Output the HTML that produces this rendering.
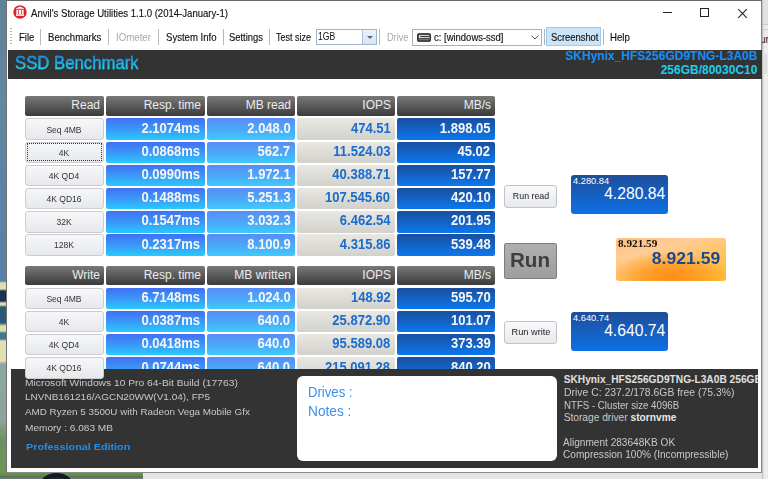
<!DOCTYPE html>
<html><head><meta charset="utf-8"><style>
*{box-sizing:border-box}
html,body{margin:0;padding:0}
body{width:768px;height:479px;overflow:hidden;position:relative;background:#e6e6e6;font-family:"Liberation Sans",sans-serif}
.a{position:absolute}
.t{position:absolute;white-space:pre;line-height:1}
.hd{position:absolute;border-radius:2px;background:linear-gradient(#767676,#5a5a5a 50%,#3c3c3c)}
.bt{position:absolute;border-radius:3px;border:1px solid #cdcdcd;background:linear-gradient(#f6f7f9,#e6e8eb)}
.c1{position:absolute;border-radius:2px;background:linear-gradient(#416ff4,#3a9bf8 55%,#27cbfe)}
.c2{position:absolute;border-radius:2px;background:linear-gradient(#5a8cf6,#4aaaf8 55%,#3ecbfd)}
.c3{position:absolute;border-radius:2px;background:linear-gradient(#e9e7e1,#d2d1cc)}
.c5{position:absolute;border-radius:2px;background:linear-gradient(#1b4e9e,#0b78ee)}
</style></head><body>
<div class="a" style="left:0px;top:0px;width:6px;height:479px;background:linear-gradient(#5e8296 0,#6088a2 100px,#5a80a8 250px,#5a80a8 281px,#dcdcb0 283px,#e0e0b0 289px,#1c3050 291px,#1c3050 301px,#d8dcb0 303px,#d8dcb0 305px,#2a5a78 307px,#2a5a78 323px,#dcdcae 326px,#dcdcae 331px,#3a7a90 333px,#3a7a90 339px,#e0e0b0 341px,#e0e0b0 361px,#8aa8a0 364px,#8ea49a 420px,#6e9060 440px,#6a9a50 479px)"></div>
<div class="a" style="left:762px;top:0px;width:6px;height:479px;background:linear-gradient(90deg,#a8a8a8 0,#d4d4d4 1px,#ececec 2px,#ebebeb 6px)"></div>
<div class="a" style="left:763px;top:0px;width:5px;height:24px;background:#e2e2e2"></div>
<div class="a" style="left:763px;top:24px;width:5px;height:1px;background:#c8c8c8"></div>
<div class="a" style="left:763px;top:29px;width:5px;height:1px;background:#d0d0d0"></div>
<div class="a" style="left:764px;top:54px;width:3px;height:20px;background:#dedede"></div>
<div class="a" style="left:762px;top:30px;width:6px;height:18px;overflow:hidden"><div class="t" style="left:-2px;top:4.5px;font-size:10px;color:#222">ur</div></div>
<div class="a" style="left:0px;top:472px;width:143px;height:7px;background:linear-gradient(#6a9650 0,#5e8a48 4px,#4a6a40 5px,#7a8088 6px,#6e7680 7px)"></div>
<div class="a" style="left:41px;top:473px;width:31px;height:20px;border-radius:50%;background:#1e2a2e;border:4px solid #111a1c"></div>
<div class="a" style="left:143px;top:473px;width:619px;height:6px;background:#e4e4e4"></div>
<div class="a" style="left:6px;top:0px;width:756px;height:473px;background:#fff;border:1px solid #8a8a8a;border-top-color:#6a6a6a;border-left-color:#727272"></div>
<svg class="a" style="left:12.8px;top:5.2px" width="14" height="14" viewBox="0 0 14 14"><circle cx="7" cy="6.95" r="6.7" fill="#e3202a"/><path d="M3.4 3.3 L7 1.5 L10.6 3.3 Z" fill="#fff"/><rect x="3" y="3.3" width="8" height="0.9" fill="#fff"/><rect x="3.4" y="5" width="7.2" height="4.2" fill="#fff"/><rect x="5.05" y="5.4" width="0.85" height="3.6" fill="#e3202a"/><rect x="8.05" y="5.4" width="0.85" height="3.6" fill="#e3202a"/><rect x="3" y="9.2" width="8" height="1.8" fill="#ffd8d0"/></svg>
<div class="t" style="top:7.99px;font-size:11px;color:#111;left:30.50px;transform:scaleX(0.87);transform-origin:0 0;-webkit-text-stroke:0.15px #111;">Anvil's Storage Utilities 1.1.0 (2014-January-1)</div>
<div class="a" style="left:663px;top:12px;width:9px;height:1px;background:#222"></div>
<div class="a" style="left:700px;top:8px;width:9px;height:9px;border:1px solid #222"></div>
<svg class="a" style="left:737px;top:7.5px" width="11" height="11" viewBox="0 0 11 11"><path d="M1.2 1.2 L9.8 9.8 M9.8 1.2 L1.2 9.8" stroke="#222" stroke-width="1.05"/></svg>
<div class="a" style="left:10px;top:28px;width:2px;height:1px;background:#b4b4b4"></div>
<div class="a" style="left:10px;top:31px;width:2px;height:1px;background:#b4b4b4"></div>
<div class="a" style="left:10px;top:34px;width:2px;height:1px;background:#b4b4b4"></div>
<div class="a" style="left:10px;top:37px;width:2px;height:1px;background:#b4b4b4"></div>
<div class="a" style="left:10px;top:40px;width:2px;height:1px;background:#b4b4b4"></div>
<div class="a" style="left:10px;top:43px;width:2px;height:1px;background:#b4b4b4"></div>
<div class="a" style="left:40px;top:29px;width:1px;height:16px;background:#b8b8b8"></div>
<div class="a" style="left:108px;top:29px;width:1px;height:16px;background:#b8b8b8"></div>
<div class="a" style="left:158px;top:29px;width:1px;height:16px;background:#b8b8b8"></div>
<div class="a" style="left:223px;top:29px;width:1px;height:16px;background:#b8b8b8"></div>
<div class="a" style="left:269px;top:29px;width:1px;height:16px;background:#b8b8b8"></div>
<div class="a" style="left:379px;top:29px;width:1px;height:16px;background:#b8b8b8"></div>
<div class="a" style="left:544px;top:29px;width:1px;height:16px;background:#b8b8b8"></div>
<div class="a" style="left:603px;top:29px;width:1px;height:16px;background:#b8b8b8"></div>
<div class="t" style="top:32.67px;font-size:10.2px;color:#111;left:19.20px;transform:scaleX(0.93);transform-origin:0 0;-webkit-text-stroke:0.15px #111;">File</div>
<div class="t" style="top:32.67px;font-size:10.2px;color:#111;left:48.30px;transform:scaleX(0.94);transform-origin:0 0;-webkit-text-stroke:0.15px #111;">Benchmarks</div>
<div class="t" style="top:32.67px;font-size:10.2px;color:#a8a8a8;left:115.80px;transform:scaleX(0.95);transform-origin:0 0;">IOmeter</div>
<div class="t" style="top:32.67px;font-size:10.2px;color:#111;left:165.50px;transform:scaleX(0.94);transform-origin:0 0;-webkit-text-stroke:0.15px #111;">System Info</div>
<div class="t" style="top:32.67px;font-size:10.2px;color:#111;left:229.40px;transform:scaleX(0.92);transform-origin:0 0;-webkit-text-stroke:0.15px #111;">Settings</div>
<div class="t" style="top:32.67px;font-size:10.2px;color:#111;left:275.80px;transform:scaleX(0.88);transform-origin:0 0;-webkit-text-stroke:0.15px #111;">Test size</div>
<div class="a" style="left:316px;top:29px;width:61px;height:16px;border:1px solid #9fb4d2;background:#fff"></div>
<div class="a" style="left:362px;top:30px;width:14px;height:14px;background:linear-gradient(#eaf2fb,#d6e5f5);border-left:1px solid #a8c2e0"></div>
<svg class="a" style="left:367px;top:36px" width="6" height="3"><path d="M0 0 L6 0 L3 3 Z" fill="#5a6878"/></svg>
<div class="t" style="top:31.87px;font-size:10.2px;color:#111;left:317.60px;transform:scaleX(0.85);transform-origin:0 0;">1GB</div>
<div class="t" style="top:32.67px;font-size:10.2px;color:#a8a8a8;left:386.70px;transform:scaleX(0.9);transform-origin:0 0;">Drive</div>
<div class="a" style="left:412px;top:29px;width:130px;height:17px;border:1px solid #b0b0b0;background:#fff"></div>
<svg class="a" style="left:416.8px;top:32.8px" width="14" height="9" viewBox="0 0 14 9"><rect x="0.8" y="0.8" width="12.4" height="7.4" rx="1" fill="#7a7a7a" stroke="#1a1a1a" stroke-width="1.3"/><rect x="2" y="2.3" width="10.2" height="3.6" fill="#f4f4f4"/><rect x="3.2" y="3.1" width="8.8" height="1.1" fill="#2a2a2a"/><rect x="2" y="5.2" width="10.2" height="0.9" fill="#2a2a2a"/></svg>
<div class="t" style="top:32.67px;font-size:10.2px;color:#111;left:433.50px;transform:scaleX(0.93);transform-origin:0 0;-webkit-text-stroke:0.15px #111;">c: [windows-ssd]</div>
<svg class="a" style="left:531px;top:35px" width="8" height="5" viewBox="0 0 8 5"><path d="M0.5 0.5 L4 4 L7.5 0.5" fill="none" stroke="#555" stroke-width="1"/></svg>
<div class="a" style="left:546px;top:27px;width:55px;height:19px;background:#cce4f7;border:1px solid #99ccf3"></div>
<div class="t" style="top:32.67px;font-size:10.2px;color:#111;left:550.60px;transform:scaleX(0.92);transform-origin:0 0;-webkit-text-stroke:0.15px #111;">Screenshot</div>
<div class="t" style="top:32.67px;font-size:10.2px;color:#111;left:610.40px;transform:scaleX(0.95);transform-origin:0 0;-webkit-text-stroke:0.15px #111;">Help</div>
<div class="a" style="left:8px;top:50px;width:754px;height:29px;background:#333"></div>
<div class="t" style="top:53.79px;font-size:18.2px;color:#18a6ee;left:15.00px;transform:scaleX(0.92);transform-origin:0 0;background:linear-gradient(#1a8ae6 20%,#20dcf4 85%);-webkit-background-clip:text;color:transparent;-webkit-text-stroke:0.35px rgba(30,180,240,0.6);">SSD Benchmark</div>
<div class="t" style="top:50.04px;font-size:12px;color:#1590f5;font-weight:700;right:10.60px;">SKHynix_HFS256GD9TNG-L3A0B</div>
<div class="t" style="top:64.24px;font-size:12px;color:#1ecdee;font-weight:700;right:10.60px;">256GB/80030C10</div>
<div class="a" style="left:25px;top:96px;width:79px;height:20px;border-radius:2px;background:linear-gradient(#787878,#5a5a5a 50%,#3b3b3b)"></div>
<div class="t" style="top:99.24px;font-size:12px;color:#ececec;right:668.00px;">Read</div>
<div class="a" style="left:106px;top:96px;width:99px;height:20px;border-radius:2px;background:linear-gradient(#787878,#5a5a5a 50%,#3b3b3b)"></div>
<div class="t" style="top:99.24px;font-size:12px;color:#ececec;right:567.00px;">Resp. time</div>
<div class="a" style="left:207px;top:96px;width:88px;height:20px;border-radius:2px;background:linear-gradient(#787878,#5a5a5a 50%,#3b3b3b)"></div>
<div class="t" style="top:99.24px;font-size:12px;color:#ececec;right:477.00px;">MB read</div>
<div class="a" style="left:297px;top:96px;width:98px;height:20px;border-radius:2px;background:linear-gradient(#787878,#5a5a5a 50%,#3b3b3b)"></div>
<div class="t" style="top:99.24px;font-size:12px;color:#ececec;right:377.00px;">IOPS</div>
<div class="a" style="left:397px;top:96px;width:98px;height:20px;border-radius:2px;background:linear-gradient(#787878,#5a5a5a 50%,#3b3b3b)"></div>
<div class="t" style="top:99.24px;font-size:12px;color:#ececec;right:277.00px;">MB/s</div>
<div class="bt" style="left:25px;top:118.40px;width:79px;height:21.6px"></div>
<div class="t" style="top:124.56px;font-size:9.5px;color:#333;left:-136.20px;width:400px;text-align:center;transform:scaleX(0.9);transform-origin:50% 0;">Seq 4MB</div>
<div class="c1" style="left:106px;top:118.40px;width:99px;height:21.6px"></div>
<div class="t" style="top:120.85px;font-size:14px;color:#f6f6f6;font-weight:700;right:567.60px;transform:scaleX(0.93);transform-origin:100% 0;">2.1074ms</div>
<div class="c2" style="left:207px;top:118.40px;width:88px;height:21.6px"></div>
<div class="t" style="top:120.85px;font-size:14px;color:#f6f6f6;font-weight:700;right:477.60px;transform:scaleX(0.93);transform-origin:100% 0;">2.048.0</div>
<div class="c3" style="left:297px;top:118.40px;width:98px;height:21.6px"></div>
<div class="t" style="top:120.85px;font-size:14px;color:#1a6ccc;font-weight:700;right:377.60px;transform:scaleX(0.93);transform-origin:100% 0;">474.51</div>
<div class="c5" style="left:397px;top:118.40px;width:98px;height:21.6px"></div>
<div class="t" style="top:120.85px;font-size:14px;color:#f6f6f6;font-weight:700;right:277.60px;transform:scaleX(0.93);transform-origin:100% 0;">1.898.05</div>
<div class="bt" style="left:25px;top:141.55px;width:79px;height:21.6px"></div>
<div class="a" style="left:27px;top:143.35px;width:75px;height:17.6px;border:1px dotted #333"></div>
<div class="t" style="top:147.71px;font-size:9.5px;color:#333;left:-136.20px;width:400px;text-align:center;transform:scaleX(0.9);transform-origin:50% 0;">4K</div>
<div class="c1" style="left:106px;top:141.55px;width:99px;height:21.6px"></div>
<div class="t" style="top:144.00px;font-size:14px;color:#f6f6f6;font-weight:700;right:567.60px;transform:scaleX(0.93);transform-origin:100% 0;">0.0868ms</div>
<div class="c2" style="left:207px;top:141.55px;width:88px;height:21.6px"></div>
<div class="t" style="top:144.00px;font-size:14px;color:#f6f6f6;font-weight:700;right:477.60px;transform:scaleX(0.93);transform-origin:100% 0;">562.7</div>
<div class="c3" style="left:297px;top:141.55px;width:98px;height:21.6px"></div>
<div class="t" style="top:144.00px;font-size:14px;color:#1a6ccc;font-weight:700;right:377.60px;transform:scaleX(0.93);transform-origin:100% 0;">11.524.03</div>
<div class="c5" style="left:397px;top:141.55px;width:98px;height:21.6px"></div>
<div class="t" style="top:144.00px;font-size:14px;color:#f6f6f6;font-weight:700;right:277.60px;transform:scaleX(0.93);transform-origin:100% 0;">45.02</div>
<div class="bt" style="left:25px;top:164.70px;width:79px;height:21.6px"></div>
<div class="t" style="top:170.86px;font-size:9.5px;color:#333;left:-136.20px;width:400px;text-align:center;transform:scaleX(0.9);transform-origin:50% 0;">4K QD4</div>
<div class="c1" style="left:106px;top:164.70px;width:99px;height:21.6px"></div>
<div class="t" style="top:167.15px;font-size:14px;color:#f6f6f6;font-weight:700;right:567.60px;transform:scaleX(0.93);transform-origin:100% 0;">0.0990ms</div>
<div class="c2" style="left:207px;top:164.70px;width:88px;height:21.6px"></div>
<div class="t" style="top:167.15px;font-size:14px;color:#f6f6f6;font-weight:700;right:477.60px;transform:scaleX(0.93);transform-origin:100% 0;">1.972.1</div>
<div class="c3" style="left:297px;top:164.70px;width:98px;height:21.6px"></div>
<div class="t" style="top:167.15px;font-size:14px;color:#1a6ccc;font-weight:700;right:377.60px;transform:scaleX(0.93);transform-origin:100% 0;">40.388.71</div>
<div class="c5" style="left:397px;top:164.70px;width:98px;height:21.6px"></div>
<div class="t" style="top:167.15px;font-size:14px;color:#f6f6f6;font-weight:700;right:277.60px;transform:scaleX(0.93);transform-origin:100% 0;">157.77</div>
<div class="bt" style="left:25px;top:187.85px;width:79px;height:21.6px"></div>
<div class="t" style="top:194.01px;font-size:9.5px;color:#333;left:-136.20px;width:400px;text-align:center;transform:scaleX(0.9);transform-origin:50% 0;">4K QD16</div>
<div class="c1" style="left:106px;top:187.85px;width:99px;height:21.6px"></div>
<div class="t" style="top:190.30px;font-size:14px;color:#f6f6f6;font-weight:700;right:567.60px;transform:scaleX(0.93);transform-origin:100% 0;">0.1488ms</div>
<div class="c2" style="left:207px;top:187.85px;width:88px;height:21.6px"></div>
<div class="t" style="top:190.30px;font-size:14px;color:#f6f6f6;font-weight:700;right:477.60px;transform:scaleX(0.93);transform-origin:100% 0;">5.251.3</div>
<div class="c3" style="left:297px;top:187.85px;width:98px;height:21.6px"></div>
<div class="t" style="top:190.30px;font-size:14px;color:#1a6ccc;font-weight:700;right:377.60px;transform:scaleX(0.93);transform-origin:100% 0;">107.545.60</div>
<div class="c5" style="left:397px;top:187.85px;width:98px;height:21.6px"></div>
<div class="t" style="top:190.30px;font-size:14px;color:#f6f6f6;font-weight:700;right:277.60px;transform:scaleX(0.93);transform-origin:100% 0;">420.10</div>
<div class="bt" style="left:25px;top:211.00px;width:79px;height:21.6px"></div>
<div class="t" style="top:217.16px;font-size:9.5px;color:#333;left:-136.20px;width:400px;text-align:center;transform:scaleX(0.9);transform-origin:50% 0;">32K</div>
<div class="c1" style="left:106px;top:211.00px;width:99px;height:21.6px"></div>
<div class="t" style="top:213.45px;font-size:14px;color:#f6f6f6;font-weight:700;right:567.60px;transform:scaleX(0.93);transform-origin:100% 0;">0.1547ms</div>
<div class="c2" style="left:207px;top:211.00px;width:88px;height:21.6px"></div>
<div class="t" style="top:213.45px;font-size:14px;color:#f6f6f6;font-weight:700;right:477.60px;transform:scaleX(0.93);transform-origin:100% 0;">3.032.3</div>
<div class="c3" style="left:297px;top:211.00px;width:98px;height:21.6px"></div>
<div class="t" style="top:213.45px;font-size:14px;color:#1a6ccc;font-weight:700;right:377.60px;transform:scaleX(0.93);transform-origin:100% 0;">6.462.54</div>
<div class="c5" style="left:397px;top:211.00px;width:98px;height:21.6px"></div>
<div class="t" style="top:213.45px;font-size:14px;color:#f6f6f6;font-weight:700;right:277.60px;transform:scaleX(0.93);transform-origin:100% 0;">201.95</div>
<div class="bt" style="left:25px;top:234.15px;width:79px;height:21.6px"></div>
<div class="t" style="top:240.31px;font-size:9.5px;color:#333;left:-136.20px;width:400px;text-align:center;transform:scaleX(0.9);transform-origin:50% 0;">128K</div>
<div class="c1" style="left:106px;top:234.15px;width:99px;height:21.6px"></div>
<div class="t" style="top:236.60px;font-size:14px;color:#f6f6f6;font-weight:700;right:567.60px;transform:scaleX(0.93);transform-origin:100% 0;">0.2317ms</div>
<div class="c2" style="left:207px;top:234.15px;width:88px;height:21.6px"></div>
<div class="t" style="top:236.60px;font-size:14px;color:#f6f6f6;font-weight:700;right:477.60px;transform:scaleX(0.93);transform-origin:100% 0;">8.100.9</div>
<div class="c3" style="left:297px;top:234.15px;width:98px;height:21.6px"></div>
<div class="t" style="top:236.60px;font-size:14px;color:#1a6ccc;font-weight:700;right:377.60px;transform:scaleX(0.93);transform-origin:100% 0;">4.315.86</div>
<div class="c5" style="left:397px;top:234.15px;width:98px;height:21.6px"></div>
<div class="t" style="top:236.60px;font-size:14px;color:#f6f6f6;font-weight:700;right:277.60px;transform:scaleX(0.93);transform-origin:100% 0;">539.48</div>
<div class="a" style="left:25px;top:265.5px;width:79px;height:19.19999999999999px;border-radius:2px;background:linear-gradient(#787878,#5a5a5a 50%,#3b3b3b)"></div>
<div class="t" style="top:268.74px;font-size:12px;color:#ececec;right:668.00px;">Write</div>
<div class="a" style="left:106px;top:265.5px;width:99px;height:19.19999999999999px;border-radius:2px;background:linear-gradient(#787878,#5a5a5a 50%,#3b3b3b)"></div>
<div class="t" style="top:268.74px;font-size:12px;color:#ececec;right:567.00px;">Resp. time</div>
<div class="a" style="left:207px;top:265.5px;width:88px;height:19.19999999999999px;border-radius:2px;background:linear-gradient(#787878,#5a5a5a 50%,#3b3b3b)"></div>
<div class="t" style="top:268.74px;font-size:12px;color:#ececec;right:477.00px;">MB written</div>
<div class="a" style="left:297px;top:265.5px;width:98px;height:19.19999999999999px;border-radius:2px;background:linear-gradient(#787878,#5a5a5a 50%,#3b3b3b)"></div>
<div class="t" style="top:268.74px;font-size:12px;color:#ececec;right:377.00px;">IOPS</div>
<div class="a" style="left:397px;top:265.5px;width:98px;height:19.19999999999999px;border-radius:2px;background:linear-gradient(#787878,#5a5a5a 50%,#3b3b3b)"></div>
<div class="t" style="top:268.74px;font-size:12px;color:#ececec;right:277.00px;">MB/s</div>
<div class="bt" style="left:25px;top:287.60px;width:79px;height:21.6px"></div>
<div class="t" style="top:293.76px;font-size:9.5px;color:#333;left:-136.20px;width:400px;text-align:center;transform:scaleX(0.9);transform-origin:50% 0;">Seq 4MB</div>
<div class="c1" style="left:106px;top:287.60px;width:99px;height:21.6px"></div>
<div class="t" style="top:290.05px;font-size:14px;color:#f6f6f6;font-weight:700;right:567.60px;transform:scaleX(0.93);transform-origin:100% 0;">6.7148ms</div>
<div class="c2" style="left:207px;top:287.60px;width:88px;height:21.6px"></div>
<div class="t" style="top:290.05px;font-size:14px;color:#f6f6f6;font-weight:700;right:477.60px;transform:scaleX(0.93);transform-origin:100% 0;">1.024.0</div>
<div class="c3" style="left:297px;top:287.60px;width:98px;height:21.6px"></div>
<div class="t" style="top:290.05px;font-size:14px;color:#1a6ccc;font-weight:700;right:377.60px;transform:scaleX(0.93);transform-origin:100% 0;">148.92</div>
<div class="c5" style="left:397px;top:287.60px;width:98px;height:21.6px"></div>
<div class="t" style="top:290.05px;font-size:14px;color:#f6f6f6;font-weight:700;right:277.60px;transform:scaleX(0.93);transform-origin:100% 0;">595.70</div>
<div class="bt" style="left:25px;top:310.75px;width:79px;height:21.6px"></div>
<div class="t" style="top:316.91px;font-size:9.5px;color:#333;left:-136.20px;width:400px;text-align:center;transform:scaleX(0.9);transform-origin:50% 0;">4K</div>
<div class="c1" style="left:106px;top:310.75px;width:99px;height:21.6px"></div>
<div class="t" style="top:313.20px;font-size:14px;color:#f6f6f6;font-weight:700;right:567.60px;transform:scaleX(0.93);transform-origin:100% 0;">0.0387ms</div>
<div class="c2" style="left:207px;top:310.75px;width:88px;height:21.6px"></div>
<div class="t" style="top:313.20px;font-size:14px;color:#f6f6f6;font-weight:700;right:477.60px;transform:scaleX(0.93);transform-origin:100% 0;">640.0</div>
<div class="c3" style="left:297px;top:310.75px;width:98px;height:21.6px"></div>
<div class="t" style="top:313.20px;font-size:14px;color:#1a6ccc;font-weight:700;right:377.60px;transform:scaleX(0.93);transform-origin:100% 0;">25.872.90</div>
<div class="c5" style="left:397px;top:310.75px;width:98px;height:21.6px"></div>
<div class="t" style="top:313.20px;font-size:14px;color:#f6f6f6;font-weight:700;right:277.60px;transform:scaleX(0.93);transform-origin:100% 0;">101.07</div>
<div class="bt" style="left:25px;top:333.90px;width:79px;height:21.6px"></div>
<div class="t" style="top:340.06px;font-size:9.5px;color:#333;left:-136.20px;width:400px;text-align:center;transform:scaleX(0.9);transform-origin:50% 0;">4K QD4</div>
<div class="c1" style="left:106px;top:333.90px;width:99px;height:21.6px"></div>
<div class="t" style="top:336.35px;font-size:14px;color:#f6f6f6;font-weight:700;right:567.60px;transform:scaleX(0.93);transform-origin:100% 0;">0.0418ms</div>
<div class="c2" style="left:207px;top:333.90px;width:88px;height:21.6px"></div>
<div class="t" style="top:336.35px;font-size:14px;color:#f6f6f6;font-weight:700;right:477.60px;transform:scaleX(0.93);transform-origin:100% 0;">640.0</div>
<div class="c3" style="left:297px;top:333.90px;width:98px;height:21.6px"></div>
<div class="t" style="top:336.35px;font-size:14px;color:#1a6ccc;font-weight:700;right:377.60px;transform:scaleX(0.93);transform-origin:100% 0;">95.589.08</div>
<div class="c5" style="left:397px;top:333.90px;width:98px;height:21.6px"></div>
<div class="t" style="top:336.35px;font-size:14px;color:#f6f6f6;font-weight:700;right:277.60px;transform:scaleX(0.93);transform-origin:100% 0;">373.39</div>
<div class="bt" style="left:25px;top:357.05px;width:79px;height:21.6px"></div>
<div class="t" style="top:363.21px;font-size:9.5px;color:#333;left:-136.20px;width:400px;text-align:center;transform:scaleX(0.9);transform-origin:50% 0;">4K QD16</div>
<div class="c1" style="left:106px;top:357.05px;width:99px;height:21.6px"></div>
<div class="t" style="top:359.50px;font-size:14px;color:#f6f6f6;font-weight:700;right:567.60px;transform:scaleX(0.93);transform-origin:100% 0;">0.0744ms</div>
<div class="c2" style="left:207px;top:357.05px;width:88px;height:21.6px"></div>
<div class="t" style="top:359.50px;font-size:14px;color:#f6f6f6;font-weight:700;right:477.60px;transform:scaleX(0.93);transform-origin:100% 0;">640.0</div>
<div class="c3" style="left:297px;top:357.05px;width:98px;height:21.6px"></div>
<div class="t" style="top:359.50px;font-size:14px;color:#1a6ccc;font-weight:700;right:377.60px;transform:scaleX(0.93);transform-origin:100% 0;">215.091.28</div>
<div class="c5" style="left:397px;top:357.05px;width:98px;height:21.6px"></div>
<div class="t" style="top:359.50px;font-size:14px;color:#f6f6f6;font-weight:700;right:277.60px;transform:scaleX(0.93);transform-origin:100% 0;">840.20</div>
<div class="a" style="left:504px;top:185px;width:53px;height:23px;border:1px solid #c0c3c8;border-radius:3px;background:linear-gradient(#f7f8fa,#e8eaed)"></div>
<div class="t" style="top:190.80px;font-size:9.8px;color:#222;left:330.50px;width:400px;text-align:center;transform:scaleX(0.9);transform-origin:50% 0;">Run read</div>
<div class="a" style="left:504px;top:321px;width:53px;height:23px;border:1px solid #c0c3c8;border-radius:3px;background:linear-gradient(#f7f8fa,#e8eaed)"></div>
<div class="t" style="top:327.30px;font-size:9.8px;color:#222;left:330.50px;width:400px;text-align:center;transform:scaleX(0.94);transform-origin:50% 0;">Run write</div>
<div class="a" style="left:504px;top:243px;width:53px;height:36px;border:1px solid #7c7c7c;border-radius:2px;background:linear-gradient(#b0b0b0,#9e9e9e)"></div>
<div class="t" style="top:251.01px;font-size:19.6px;color:#3e3e3e;font-weight:700;left:330.30px;width:400px;text-align:center;transform:scaleX(1.05);transform-origin:50% 0;">Run</div>
<div class="a" style="left:571px;top:174.5px;width:97px;height:39.0px;border-radius:3px;background:linear-gradient(#1f4e98,#0d70e6)"></div>
<div class="t" style="top:177.23px;font-size:9.3px;color:#fff;left:573.00px;">4.280.84</div>
<div class="t" style="top:185.91px;font-size:15.7px;color:#fff;right:102.80px;">4.280.84</div>
<div class="a" style="left:571px;top:311.5px;width:97px;height:39.69999999999999px;border-radius:3px;background:linear-gradient(#1f4e98,#0d70e6)"></div>
<div class="t" style="top:314.43px;font-size:9.3px;color:#fff;left:573.00px;">4.640.74</div>
<div class="t" style="top:323.31px;font-size:15.7px;color:#fff;right:102.80px;">4.640.74</div>
<div class="a" style="left:615.5px;top:238.3px;width:110.0px;height:42.39999999999998px;border-radius:3px;background:radial-gradient(ellipse 60px 24px at 50% 88%,#ff8e12 0%,rgba(255,145,25,0.7) 45%,rgba(255,160,40,0) 100%),linear-gradient(165deg,#ffbe80 0%,#ffcd96 30%,#ffc468 55%,#ffbe30 100%)"></div>
<div class="t" style="top:238.81px;font-size:10.5px;color:#111;font-weight:700;font-family:'Liberation Serif',serif;left:617.50px;transform:scaleX(1.07);transform-origin:0 0;">8.921.59</div>
<div class="t" style="top:250.03px;font-size:16.5px;color:#1a4a8a;font-weight:700;right:47.80px;transform:scaleX(1.065);transform-origin:100% 0;">8.921.59</div>
<div class="a" style="left:11px;top:369px;width:747px;height:99px;background:#333"></div>
<div class="bt" style="left:25px;top:357.05px;width:79px;height:21.6px"></div>
<div class="t" style="top:363.21px;font-size:9.5px;color:#333;left:-136.20px;width:400px;text-align:center;transform:scaleX(0.9);transform-origin:50% 0;">4K QD16</div>
<div class="a" style="left:297px;top:376px;width:260px;height:85px;background:#fff;border-radius:6px"></div>
<div class="t" style="top:386.43px;font-size:13.9px;color:#3d8fe8;left:307.80px;transform:scaleX(0.945);transform-origin:0 0;">Drives :</div>
<div class="t" style="top:405.23px;font-size:13.9px;color:#3d8fe8;left:307.80px;transform:scaleX(0.985);transform-origin:0 0;">Notes :</div>
<div class="t" style="top:377.67px;font-size:9.6px;color:#c8c8c8;left:24.80px;transform:scaleX(1.07);transform-origin:0 0;">Microsoft Windows 10 Pro 64-Bit Build (17763)</div>
<div class="t" style="top:392.37px;font-size:9.6px;color:#c8c8c8;left:24.80px;transform:scaleX(1.042);transform-origin:0 0;">LNVNB161216/AGCN20WW(V1.04), FP5</div>
<div class="t" style="top:407.27px;font-size:9.6px;color:#c8c8c8;left:24.80px;transform:scaleX(1.026);transform-origin:0 0;">AMD Ryzen 5 3500U with Radeon Vega Mobile Gfx</div>
<div class="t" style="top:422.87px;font-size:9.6px;color:#c8c8c8;left:24.80px;transform:scaleX(1.051);transform-origin:0 0;">Memory : 6.083 MB</div>
<div class="t" style="top:442.16px;font-size:9.5px;color:#1e90f0;font-weight:700;left:25.80px;transform:scaleX(1.135);transform-origin:0 0;">Professional Edition</div>
<div class="a" style="left:563px;top:369px;width:194.5px;height:99px;overflow:hidden">
<div class="t" style="left:0.70px;top:5.97px;font-size:10.2px;color:#e0e0e0;font-weight:700;">SKHynix_HFS256GD9TNG-L3A0B 256GB</div>
<div class="t" style="left:0.70px;top:19.47px;font-size:10.2px;color:#c8c8c8;transform:scaleX(1.02);transform-origin:0 0;">Drive C: 237.2/178.6GB free (75.3%)</div>
<div class="t" style="left:0.70px;top:32.07px;font-size:10.2px;color:#c8c8c8;transform:scaleX(0.95);transform-origin:0 0;">NTFS - Cluster size 4096B</div>
<div class="t" style="left:0.70px;top:44.37px;font-size:10.2px;color:#c8c8c8;">Storage driver <b style='color:#e8e8e8'>stornvme</b></div>
<div class="t" style="left:-0.40px;top:68.67px;font-size:10.2px;color:#c8c8c8;transform:scaleX(0.99);transform-origin:0 0;">Alignment 283648KB OK</div>
<div class="t" style="left:-0.40px;top:81.07px;font-size:10.2px;color:#c8c8c8;transform:scaleX(0.99);transform-origin:0 0;">Compression 100% (Incompressible)</div>
</div>
</body></html>
